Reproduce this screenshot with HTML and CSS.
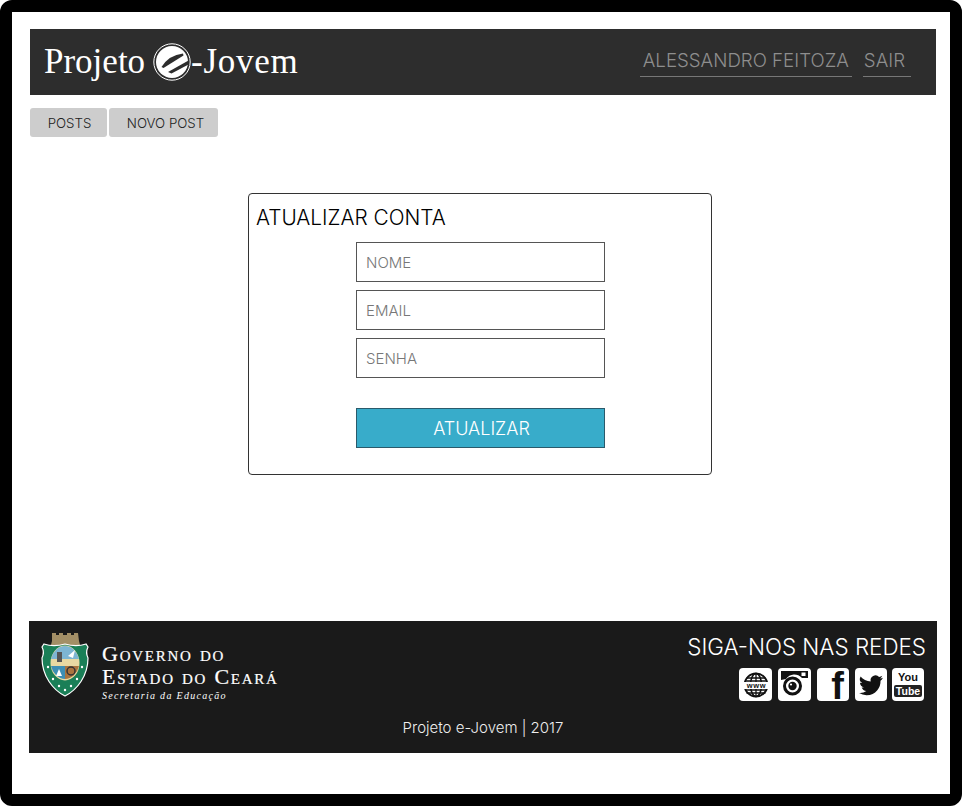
FILE: index.html
```html
<!DOCTYPE html>
<html>
  <head>
    <title>Projeto e-Jovem</title>
    <link rel="stylesheet" href="styles.css">
  </head>
  <body>
    <div class="frame">
      <header class="topo">
        <div class="logo">
          <span>Projeto</span>
          <svg class="logo-e" viewBox="0 0 38 38" width="38" height="38">
            <circle cx="19" cy="19" r="18.2" fill="none" stroke="#fff" stroke-width="1"/>
            <circle cx="19" cy="19" r="16" fill="#fff"/>
            <path d="M8.500 24 Q16 12 30 10.500 L30.500 12.500 L10.500 25 Z" fill="#2d2d2d"/>
            <path d="M15 29 L35.500 17.500 L35.500 21.500 L18.500 30.500 Z" fill="#2d2d2d"/>
          </svg>
          <span class="logo-fim">-Jovem</span>
        </div>
        <nav class="usuario">
          <a class="usuario-link">ALESSANDRO FEITOZA</a>
          <a class="usuario-link usuario-sair">SAIR</a>
        </nav>
      </header>

      <div class="abas">
        <a class="aba aba-posts">POSTS</a>
        <a class="aba aba-novo">NOVO POST</a>
      </div>

      <main class="conteudo">
        <form class="cartao">
          <h1 class="cartao-titulo">ATUALIZAR CONTA</h1>
          <div class="campos">
            <input class="campo" placeholder="NOME">
            <input class="campo" placeholder="EMAIL">
            <input class="campo" placeholder="SENHA">
            <button class="botao" type="button">ATUALIZAR</button>
          </div>
        </form>
      </main>

      <footer class="rodape">
        <div class="rodape-linha">
          <div class="governo">
            <svg class="brasao" viewBox="0 0 48 66" width="48" height="66">
              <path d="M11 1 h4 v2 h3 v-2 h4 v2 h4 v-2 h4 v2 h3 v-2 h4 l1 8 l1 4 h-29 l1 -4 z" fill="#a38f66"/>
              <path d="M24 12 C31 14 39 14 45 12 L47 15 C45 19 45 22 47 26 C47 44 36 58 24 64 C12 58 1 44 1 26 C3 22 3 19 1 15 L3 12 C9 14 17 14 24 12 Z" fill="#1a7f57" stroke="#fff" stroke-width="1.2"/>
              <ellipse cx="24" cy="31" rx="14.5" ry="17.5" fill="#e8d9a2"/>
              <path d="M10 27 a14.5 17.5 0 0 1 28 0 z" fill="#7db5d3"/>
              <path d="M10 34 h14 v13 a14.5 17.5 0 0 1 -14 -13 z" fill="#3d8fb5"/>
              <path d="M24 34 h14 a14.5 17.5 0 0 1 -14 13 z" fill="#a9743f"/>
              <path d="M16 20 h5 v10 h-5 z" fill="#555"/>
              <path d="M27 24 l7 -6 l-2 8 z" fill="#fff"/>
              <circle cx="30" cy="39" r="4" fill="none" stroke="#333" stroke-width="1.5"/>
              <path d="M15 44 l3 -7 l3 7 z" fill="#fff"/>
              <g fill="#fff">
                <circle cx="7" cy="35" r="1.2"/><circle cx="41" cy="35" r="1.2"/>
                <circle cx="12" cy="47" r="1.2"/><circle cx="36" cy="47" r="1.2"/>
                <circle cx="18" cy="54" r="1.2"/><circle cx="30" cy="54" r="1.2"/>
                <circle cx="24" cy="58" r="1.2"/>
              </g>
            </svg>
            <div class="governo-texto">
              <div class="governo-nome">Governo do</div>
              <div class="governo-nome">Estado do Ceará</div>
              <div class="governo-sec">Secretaria da Educação</div>
            </div>
          </div>
          <div class="redes">
            <div class="redes-titulo">SIGA-NOS NAS REDES</div>
            <div class="redes-icones">
              <span class="icone icone-larga">
                <svg viewBox="0 0 26 26" width="26" height="26">
                  <circle cx="13" cy="13" r="11.500" fill="none" stroke="#111" stroke-width="1.800"/>
                  <ellipse cx="13" cy="13" rx="5.500" ry="11.500" fill="none" stroke="#111" stroke-width="1.500"/>
                  <path d="M13 1.500 V24.500 M3.500 6 H22.500 M2 9 H24 M2 18 H24 M3.500 21 H22.500" stroke="#111" stroke-width="1.300"/>
                  <rect x="0" y="10" width="26" height="7" fill="#fff"/>
                  <text x="13.500" y="16.300" text-anchor="middle" class="icone-www-txt">www</text>
                </svg>
              </span>
              <span class="icone icone-larga">
                <svg viewBox="0 0 33 33" width="33" height="33">
                  <path d="M3 3 H30 V10 H24 A10 10 0 0 0 8 11 L3 12 Z" fill="#111"/>
                  <rect x="23.500" y="4.500" width="4" height="3.500" fill="#fff"/>
                  <circle cx="14.500" cy="18" r="8" fill="#fff" stroke="#111" stroke-width="3"/>
                  <circle cx="14.500" cy="18" r="4.200" fill="#111"/>
                  <circle cx="13" cy="16.500" r="1.100" fill="#fff"/>
                </svg>
              </span>
              <span class="icone icone-f">f</span>
              <span class="icone">
                <svg viewBox="0 0 24 24" width="26" height="26">
                  <path fill="#111" d="M23 5.300c-.8.400-1.700.600-2.600.700.900-.600 1.600-1.400 2-2.500-.900.500-1.900.900-2.900 1.100a4.600 4.600 0 0 0-7.800 4.200C8 8.600 4.600 6.800 2.400 4.100a4.600 4.600 0 0 0 1.400 6.100c-.700 0-1.400-.200-2-.600 0 2.300 1.600 4.100 3.700 4.600-.700.200-1.400.200-2.100.100.600 1.800 2.300 3.100 4.300 3.200A9.200 9.200 0 0 1 1 19.400a13 13 0 0 0 7 2c8.400 0 13.100-7.100 12.800-13.400.900-.600 1.700-1.500 2.200-2.700z"/>
                </svg>
              </span>
              <span class="icone icone-yt">
                <span class="yt-you">You</span>
                <span class="yt-tube">Tube</span>
              </span>
            </div>
          </div>
        </div>
        <div class="rodape-copy">Projeto e-Jovem | 2017</div>
      </footer>
    </div>
  </body>
</html>
```

FILE: styles.css
```css
body {
  margin: 0;
  background: #fff;
  font-family: Inter, "Open Sans", sans-serif;
  font-weight: 300;
}
.frame {
  box-sizing: border-box;
  width: 962px;
  height: 806px;
  border: 12px solid #000;
  border-radius: 12px;
  padding: 17px 13px 0 17px;
}

/* topo */
.topo {
  height: 66px;
  margin: 0 1px 0 1px;
  background: #2d2d2d;
  display: flex;
  justify-content: space-between;
  align-items: center;
}
.logo {
  display: flex;
  align-items: center;
  margin-left: 14px;
  color: #fff;
  font-family: "Liberation Serif", serif;
  font-size: 35px;
  font-weight: 400;
}
.logo-e {
  margin: 0 0 0 8px;
}
.logo-fim {
  letter-spacing: 0.7px;
}
.usuario {
  display: flex;
  gap: 11px;
  margin-right: 25px;
  align-self: flex-start;
  padding-top: 16px;
}
.usuario-link {
  color: #8e8e8e;
  font-size: 18.7px;
  line-height: 31px;
  padding: 0 3px;
  border-bottom: 1px solid #777;
}
.usuario-sair {
  padding: 0 6px 0 1px;
}

/* abas */
.abas {
  display: flex;
  gap: 2px;
  margin: 13px 0 0 1px;
}
.aba {
  box-sizing: border-box;
  height: 29px;
  line-height: 30px;
  background: #cdcdcd;
  border-radius: 3px;
  color: #222;
  font-size: 13.3px;
  text-align: center;
}
.aba-posts {
  width: 77px;
  padding-left: 2px;
}
.aba-novo {
  width: 109px;
  padding-left: 4px;
}

/* formulario */
.conteudo {
  height: 484px;
  padding: 56px 0 0 219px;
  box-sizing: border-box;
}
.cartao {
  box-sizing: border-box;
  width: 464px;
  height: 282px;
  border: 1px solid #333;
  border-radius: 4px;
}
.cartao-titulo {
  margin: 9px 0 0 7px;
  color: #000;
  font-size: 20.8px;
  line-height: 30px;
  font-weight: 300;
}
.campos {
  display: flex;
  flex-direction: column;
  width: 249px;
  margin: 9px 0 0 107px;
}
.campo {
  box-sizing: border-box;
  width: 249px;
  height: 40px;
  margin-bottom: 8px;
  padding: 0 9px;
  border: 1px solid #555;
  background: #fff;
  font-family: inherit;
  font-weight: 300;
  font-size: 15px;
  outline: none;
}
.campo::placeholder {
  color: #777;
  opacity: 1;
}
.botao {
  height: 40px;
  margin-top: 22px;
  padding-left: 8px;
  border: 1px solid #2a5a6b;
  background: #38acca;
  color: #fff;
  font-family: inherit;
  font-weight: 300;
  font-size: 18px;
}

/* rodape */
.rodape {
  box-sizing: border-box;
  height: 132px;
  background: #1a1a1a;
  color: #fff;
  padding-top: 11px;
}
.rodape-linha {
  display: flex;
  justify-content: space-between;
}
.governo {
  display: flex;
  margin: 0 0 0 12px;
}
.brasao {
  display: block;
}
.governo-texto {
  margin: 10px 0 0 13px;
  font-family: "Liberation Serif", serif;
  font-weight: 400;
}
.governo-nome {
  font-size: 22px;
  line-height: 23px;
  font-variant: small-caps;
  letter-spacing: 1.75px;
  -webkit-text-stroke: 0.2px #fff;
}
.governo-sec {
  font-size: 10px;
  font-style: italic;
  letter-spacing: 1.3px;
  line-height: 15px;
}
.redes {
  margin-right: 11px;
}
.redes-titulo {
  font-size: 22.4px;
  line-height: 30px;
  text-align: right;
}
.redes-icones {
  display: flex;
  justify-content: flex-end;
  gap: 6px;
  margin: 6px 2px 0 0;
}
.icone {
  width: 32px;
  height: 33px;
  background: #fff;
  border-radius: 4px;
  display: flex;
  align-items: center;
  justify-content: center;
  color: #111;
}
.icone-larga {
  width: 33px;
}
.icone-www-txt {
  font-family: "Liberation Sans", sans-serif;
  font-size: 7.500px;
  font-weight: 700;
  letter-spacing: 0.6px;
  fill: #111;
}
.icone-f {
  box-sizing: border-box;
  align-items: flex-start;
  padding: 3px 0 0 9px;
  font-family: "Liberation Sans", sans-serif;
  font-size: 38px;
  font-weight: 700;
  line-height: 30px;
}
.icone-yt {
  flex-direction: column;
  margin-left: -1px;
  font-family: "Liberation Sans Narrow", "Liberation Sans", sans-serif;
  font-weight: 700;
  line-height: 1;
  gap: 2px;
}
.yt-you {
  font-size: 11px;
}
.yt-tube {
  background: #222;
  color: #fff;
  font-size: 10.500px;
  padding: 1px 2px;
  border-radius: 2px;
}
.rodape-copy {
  margin-top: 14px;
  text-align: center;
  font-size: 15px;
  line-height: 22px;
  color: #eee;
}
```
